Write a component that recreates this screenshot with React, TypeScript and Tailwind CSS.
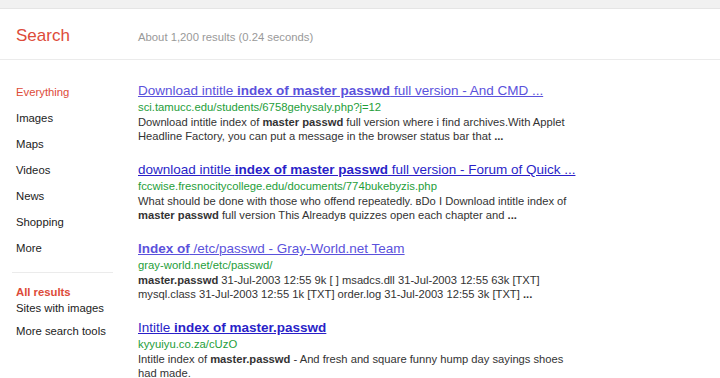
import React from "react";

const navItems = ["Everything", "Images", "Maps", "Videos", "News", "Shopping", "More"];

type Part = { t: string; b?: boolean };

const results: { title: Part[]; color: string; url: string; snippet: Part[][] }[] = [
  {
    title: [{ t: "Download intitle " }, { t: "index of master passwd", b: true }, { t: " full version - And CMD ..." }],
    color: "text-[#5b52dc]",
    url: "sci.tamucc.edu/students/6758gehysaly.php?j=12",
    snippet: [
      [{ t: "Download intitle index of " }, { t: "master passwd", b: true }, { t: " full version where i find archives.With Applet" }],
      [{ t: "Headline Factory, you can put a message in the browser status bar that " }, { t: "...", b: true }],
    ],
  },
  {
    title: [{ t: "download intitle " }, { t: "index of master passwd", b: true }, { t: " full version - Forum of Quick ..." }],
    color: "text-[#2a1fc8]",
    url: "fccwise.fresnocitycollege.edu/documents/774bukebyzis.php",
    snippet: [
      [{ t: "What should be done with those who offend repeatedly. вDo I Download intitle index of" }],
      [{ t: "master passwd", b: true }, { t: " full version This Alreadyв quizzes open each chapter and " }, { t: "...", b: true }],
    ],
  },
  {
    title: [{ t: "Index of", b: true }, { t: " /etc/passwd - Gray-World.net Team" }],
    color: "text-[#5b52dc]",
    url: "gray-world.net/etc/passwd/",
    snippet: [
      [{ t: "master.passwd", b: true }, { t: " 31-Jul-2003 12:55 9k [ ] msadcs.dll 31-Jul-2003 12:55 63k [TXT]" }],
      [{ t: "mysql.class 31-Jul-2003 12:55 1k [TXT] order.log 31-Jul-2003 12:55 3k [TXT] " }, { t: "...", b: true }],
    ],
  },
  {
    title: [{ t: "Intitle " }, { t: "index of master.passwd", b: true }],
    color: "text-[#2a1fc8]",
    url: "kyyuiyu.co.za/cUzO",
    snippet: [
      [{ t: "Intitle index of " }, { t: "master.passwd", b: true }, { t: " - And fresh and square funny hump day sayings shoes" }],
      [{ t: "had made." }],
    ],
  },
];

function Parts({ parts }: { parts: Part[] }) {
  return (
    <>
      {parts.map((p, i) =>
        p.b ? (
          <b key={i} className="font-bold">
            {p.t}
          </b>
        ) : (
          <span key={i}>{p.t}</span>
        )
      )}
    </>
  );
}

export default function App() {
  return (
    <div
      className="w-[720px] min-h-[378px] bg-white"
      style={{ fontFamily: '"Liberation Sans", Arial, sans-serif' }}
    >
      <div className="h-[9px] bg-[#f1f1f1] border-b border-[#e5e5e5]" />
      <div className="h-[51px] flex items-center border-b border-[#ebebeb]">
        <div className="w-[138px] pl-4 text-[17px] leading-none text-[#dd4b39] mt-[3px]">Search</div>
        <div className="text-[11.3px] text-[#999999] mt-[6px]">About 1,200 results (0.24 seconds)</div>
      </div>
      <div className="flex">
        <div className="w-[138px] shrink-0 pt-[19px]">
          <div className="pl-4">
            {navItems.map((n, i) => (
              <div
                key={n}
                className={`h-[26px] leading-[26px] text-[11.3px] ${i === 0 ? "text-[#dd4b39]" : "text-[#222222]"}`}
              >
                {n}
              </div>
            ))}
          </div>
          <div className="ml-3 w-[101px] mt-[11px] border-t border-[#ebebeb]" />
          <div className="pl-4 mt-[11px]">
            <div className="h-[16px] leading-[16px] text-[11.3px] font-bold text-[#dd4b39]">All results</div>
            <div className="h-[16px] leading-[16px] text-[11.3px] text-[#222222]">Sites with images</div>
            <div className="h-[16px] leading-[16px] text-[11.3px] text-[#222222] mt-[7px]">More search tools</div>
          </div>
        </div>
        <div className="pt-[21px] flex flex-col gap-[17px]">
          {results.map((r, i) => (
            <div key={i}>
              <div className={`h-[19px] leading-[19px] text-[13.5px] underline whitespace-nowrap ${r.color}`}>
                <Parts parts={r.title} />
              </div>
              <div className="h-[15px] leading-[15px] text-[11.3px] text-[#1e9e3a] whitespace-nowrap">{r.url}</div>
              {r.snippet.map((line, j) => (
                <div key={j} className="h-[14px] leading-[14px] text-[11.2px] text-[#333333] whitespace-nowrap">
                  <Parts parts={line} />
                </div>
              ))}
            </div>
          ))}
        </div>
      </div>
    </div>
  );
}
